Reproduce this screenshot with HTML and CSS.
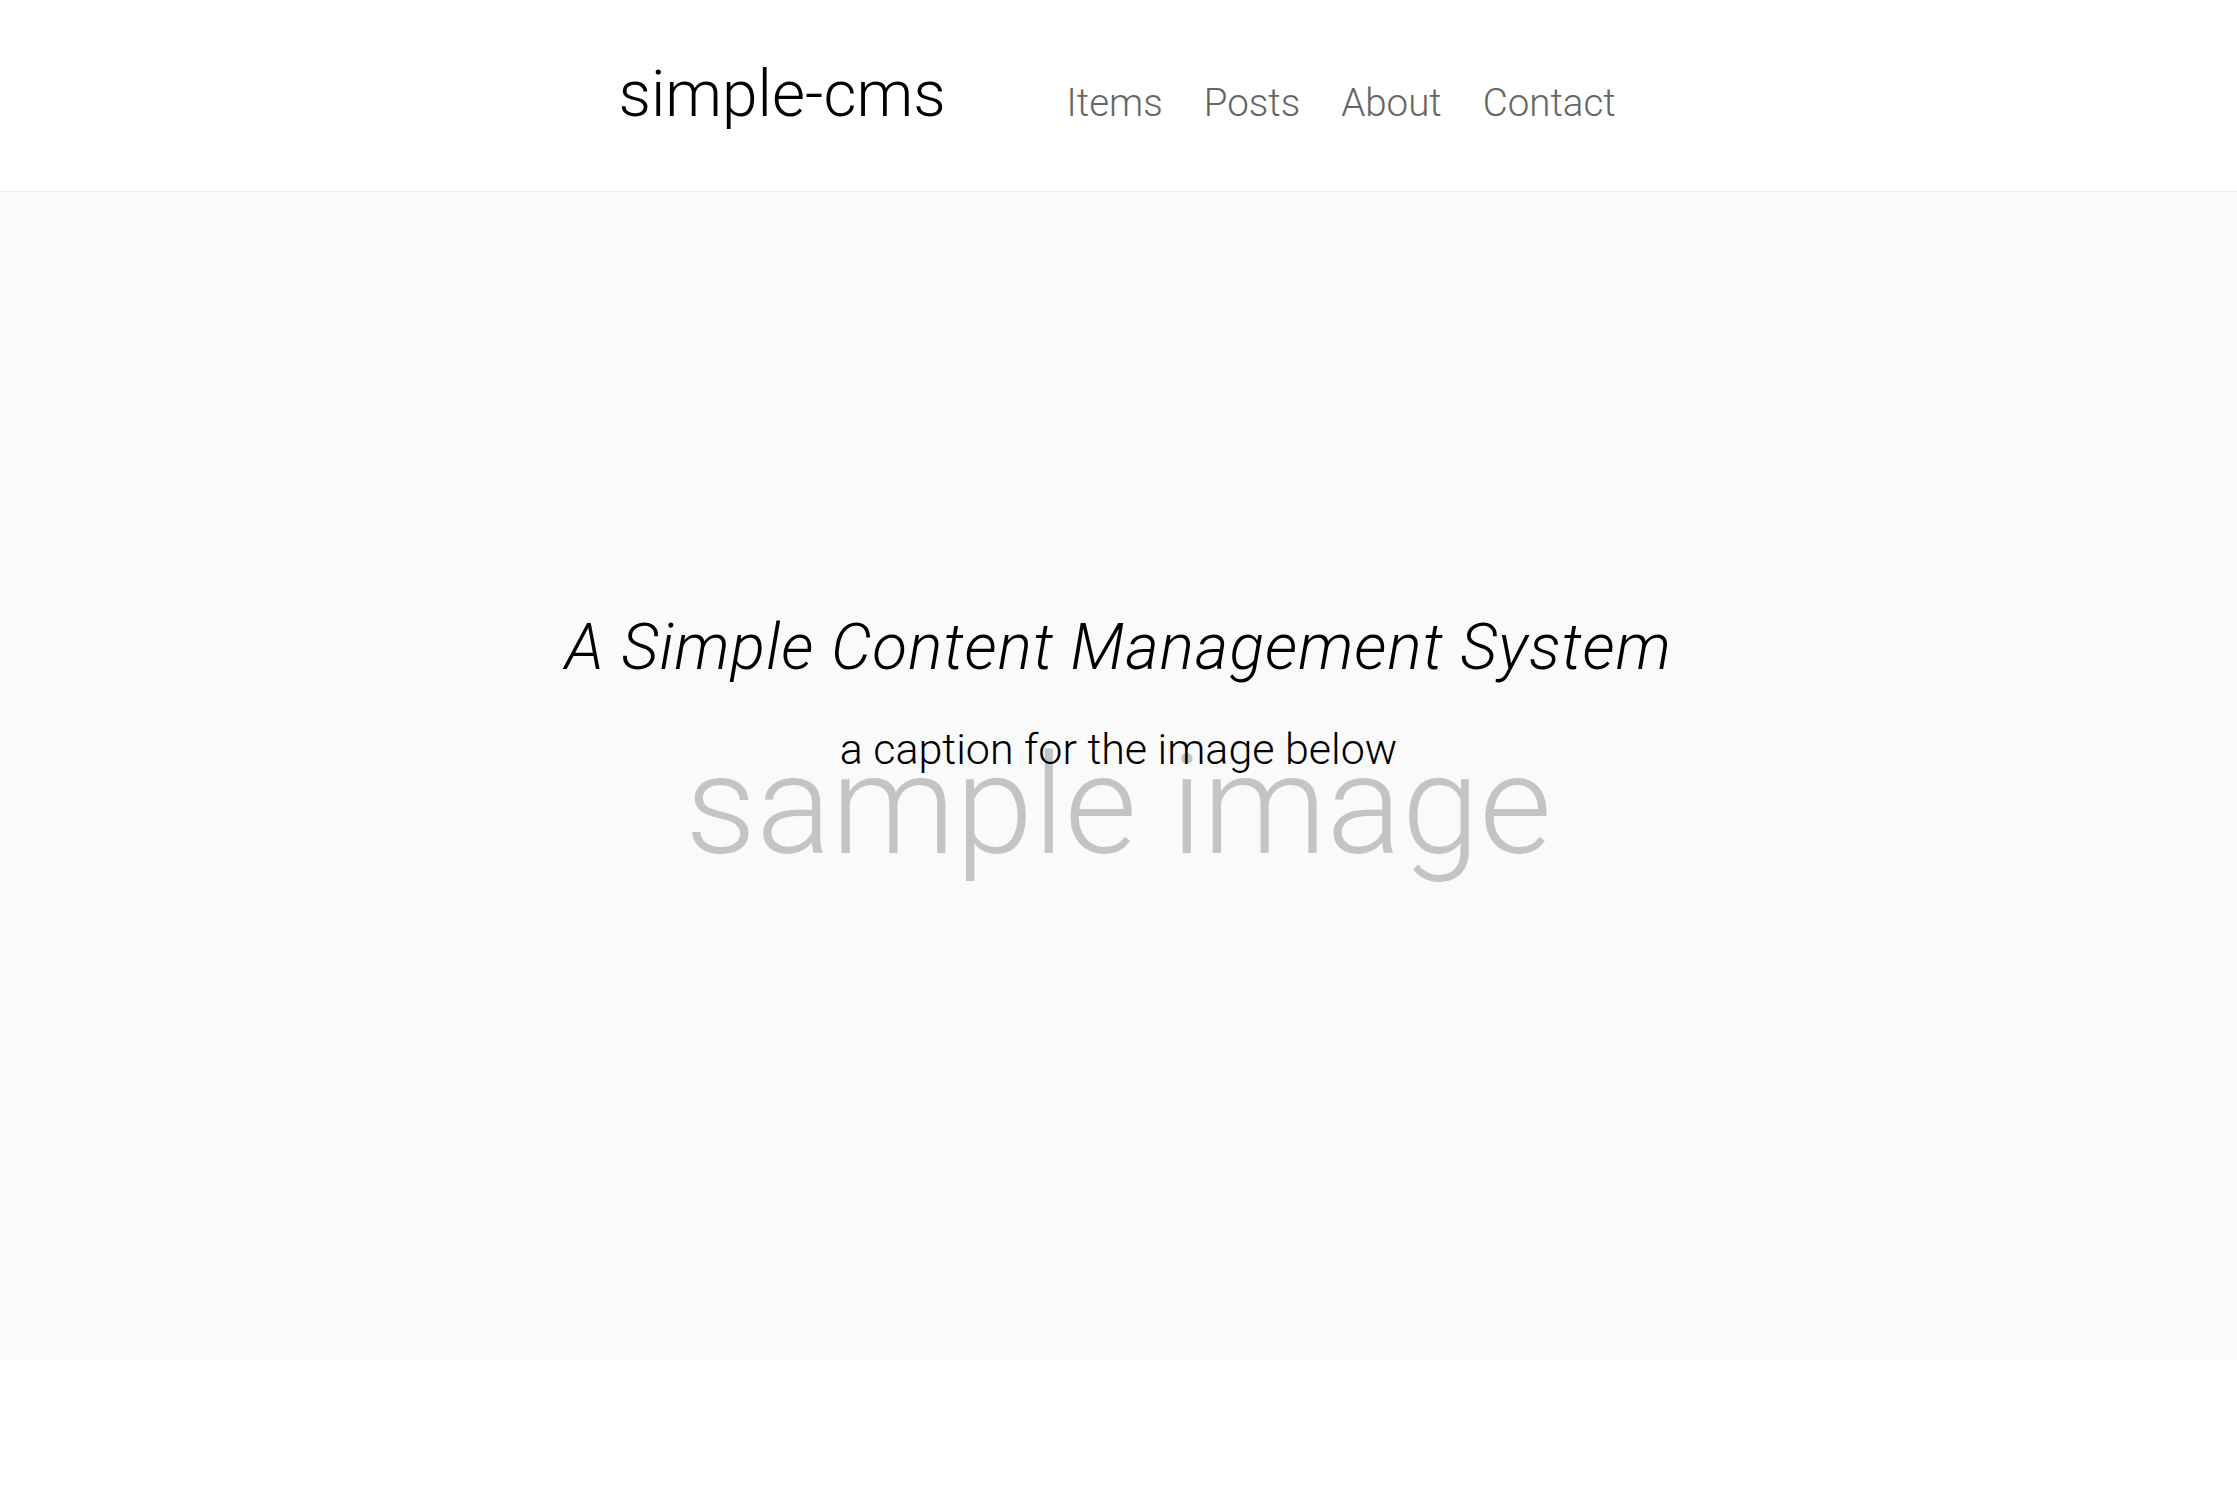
FILE: index.html
```html
<!DOCTYPE html>
<html lang="en">
<head>
<meta charset="utf-8">
<title>simple-cms</title>
<link rel="stylesheet" href="styles.css">
</head>
<body>
<header class="site-header">
  <div class="header-inner">
    <a class="logo" href="#">simple-cms</a>
    <nav class="nav">
      <a class="nav-link" href="#">Items</a>
      <a class="nav-link" href="#">Posts</a>
      <a class="nav-link" href="#">About</a>
      <a class="nav-link" href="#">Contact</a>
    </nav>
  </div>
</header>
<main>
  <section class="hero">
    <h1 class="hero-title">A Simple Content Management System</h1>
    <p class="hero-caption">a caption for the image below</p>
    <div class="hero-image">sample image</div>
  </section>
</main>
</body>
</html>
```

FILE: styles.css
```css
html, body {
  margin: 0;
  padding: 0;
  background: #ffffff;
}
body {
  font-family: Roboto, "Liberation Sans", sans-serif;
  font-weight: 300;
  color: #000;
}
a {
  text-decoration: none;
}
.site-header {
  height: 191px;
  border-bottom: 1px solid #ececec;
  background: #fff;
  box-sizing: content-box;
}
.header-inner {
  width: 1000px;
  margin: 0 auto;
  padding-top: 63px;
  display: flex;
  align-items: baseline;
}
.logo {
  flex: 0 0 448px;
  font-size: 64px;
  line-height: 1;
  color: #000;
}
.nav {
  display: flex;
  gap: 41px;
  align-items: baseline;
}
.nav-link {
  font-size: 38.5px;
  line-height: 1;
  color: #666;
}
.hero {
  height: 1169px;
  box-sizing: border-box;
  padding-bottom: 62px;
  background: #fafafa;
  display: flex;
  flex-direction: column;
  align-items: center;
  justify-content: center;
  text-align: center;
}
.hero-title {
  margin: 0;
  font-size: 64px;
  line-height: 1;
  font-weight: 300;
  font-style: italic;
  letter-spacing: 1.1px;
  color: #000;
  position: relative;
  z-index: 1;
}
.hero-caption {
  margin: 48px 0 0;
  font-size: 43px;
  line-height: 1;
  color: #000;
  position: relative;
  z-index: 1;
}
.hero-image {
  margin-top: -36px;
  font-size: 140px;
  line-height: 1;
  color: #c4c4c4;
}
```
